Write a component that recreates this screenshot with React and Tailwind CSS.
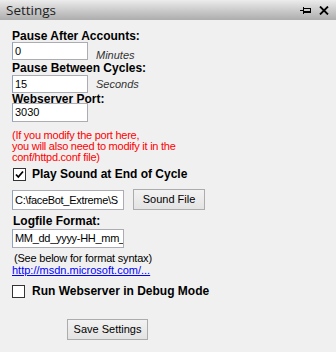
import React from 'react';

const PinIcon = () => (
  <svg width="11" height="8" viewBox="0 0 11 8" className="block">
    <path d="M0 4.5H4" stroke="#000" strokeWidth="1" shapeRendering="crispEdges" />
    <path d="M3.5 1V8" stroke="#000" strokeWidth="1" shapeRendering="crispEdges" />
    <path d="M4 2.5H10.5V6.5H4" fill="none" stroke="#000" strokeWidth="1" shapeRendering="crispEdges" />
    <path d="M4 6H11" stroke="#000" strokeWidth="2" shapeRendering="crispEdges" />
  </svg>
);

const CloseIcon = () => (
  <svg width="10" height="9" viewBox="0 0 10 9" className="block">
    <path d="M1 0.5L9 8.5M9 0.5L1 8.5" stroke="#000" strokeWidth="1.8" />
  </svg>
);

const Check = ({ checked }) => (
  <div className="w-[13px] h-[13px] shrink-0 border border-[#333] bg-white flex items-center justify-center">
    {checked && (
      <svg width="9" height="9" viewBox="0 0 9 9">
        <path d="M1 4.5L3.3 7L8 1.5" fill="none" stroke="#000" strokeWidth="1.8" />
      </svg>
    )}
  </div>
);

const TextBox = ({ value, className = '' }) => (
  <div
    className={`border border-[#abadb3] border-l-[#8ea3c4] bg-white text-[11px] leading-[16px] text-black pl-[2px] overflow-hidden whitespace-nowrap ${className}`}
  >
    {value}
  </div>
);

const Button = ({ children, className = '' }) => (
  <div
    className={`border border-[#acacac] bg-gradient-to-b from-[#f2f2f2] to-[#e3e3e3] text-[11px] text-black flex items-center justify-center ${className}`}
  >
    {children}
  </div>
);

const Label = ({ children, className = '' }) => (
  <div className={`text-[12px] font-bold leading-[13px] text-black ${className}`}>{children}</div>
);

export default function App() {
  return (
    <div
      className="w-[336px] h-[352px] bg-[#f0f0f0] overflow-hidden"
      style={{ fontFamily: '"Liberation Sans", Arial, sans-serif' }}
    >
      {/* Header */}
      <div className="h-[20px] bg-gradient-to-b from-[#ececec] to-[#adadad] flex items-center justify-between pl-[6px] pr-[7px]">
        <span
          className="text-[13.5px] leading-[20px] text-[#1e1e1e]"
          style={{ fontFamily: '"Open Sans", sans-serif' }}
        >
          Settings
        </span>
        <div className="flex items-center gap-[8px]">
          <PinIcon />
          <CloseIcon />
        </div>
      </div>

      {/* Content */}
      <div className="pl-[12px] flex flex-col">
        <Label className="mt-[10px]">Pause After Accounts:</Label>
        <div className="flex items-start -mt-[1px]">
          <TextBox value="0" className="w-[76px] h-[18px]" />
          <span className="ml-[8px] mt-[8px] text-[11px] leading-[11px] italic text-[#333]">Minutes</span>
        </div>

        <Label className="mt-[1px]">Pause Between Cycles:</Label>
        <div className="flex items-start">
          <TextBox value="15" className="w-[76px] h-[18px]" />
          <span className="ml-[8px] mt-[4px] text-[11px] leading-[11px] italic text-[#333]">Seconds</span>
        </div>

        <Label>Webserver Port:</Label>
        <TextBox value="3030" className="w-[76px] h-[19px] -mt-[3px]" />

        <div className="mt-[8px] text-[11px] leading-[11px] tracking-[-0.25px] text-[#ff0000]">
          <div>(If you modify the port here,</div>
          <div>you will also need to modify it in the</div>
          <div>conf/httpd.conf file)</div>
        </div>

        <div className="mt-[5px] ml-[1px] flex items-center gap-[6px]">
          <Check checked />
          <span className="text-[12px] font-bold leading-[13px]">Play Sound at End of Cycle</span>
        </div>

        <div className="mt-[8px] flex items-start gap-[9px]">
          <TextBox value="C:\faceBot_Extreme\S" className="w-[112px] h-[20px] mt-[1px] leading-[18px] tracking-[-0.3px]" />
          <Button className="w-[72px] h-[21px]">Sound File</Button>
        </div>

        <Label className="mt-[5px] ml-[1px]">Logfile Format:</Label>
        <TextBox value="MM_dd_yyyy-HH_mm_" className="w-[112px] h-[19px] mt-[1px] leading-[17px] tracking-[-0.3px]" />

        <div className="mt-[5px] ml-[2px] text-[11px] leading-[11px] tracking-[-0.2px] text-black">(See below for format syntax)</div>
        <a className="mt-[1px] text-[11px] leading-[11px] text-[#0000ff] underline w-fit">http://msdn.microsoft.com/...</a>

        <div className="mt-[9px] flex items-center gap-[7px]">
          <Check />
          <span className="text-[12px] font-bold leading-[13px]">Run Webserver in Debug Mode</span>
        </div>

        <Button className="mt-[21px] ml-[55px] w-[81px] h-[21px]">Save Settings</Button>
      </div>
    </div>
  );
}
